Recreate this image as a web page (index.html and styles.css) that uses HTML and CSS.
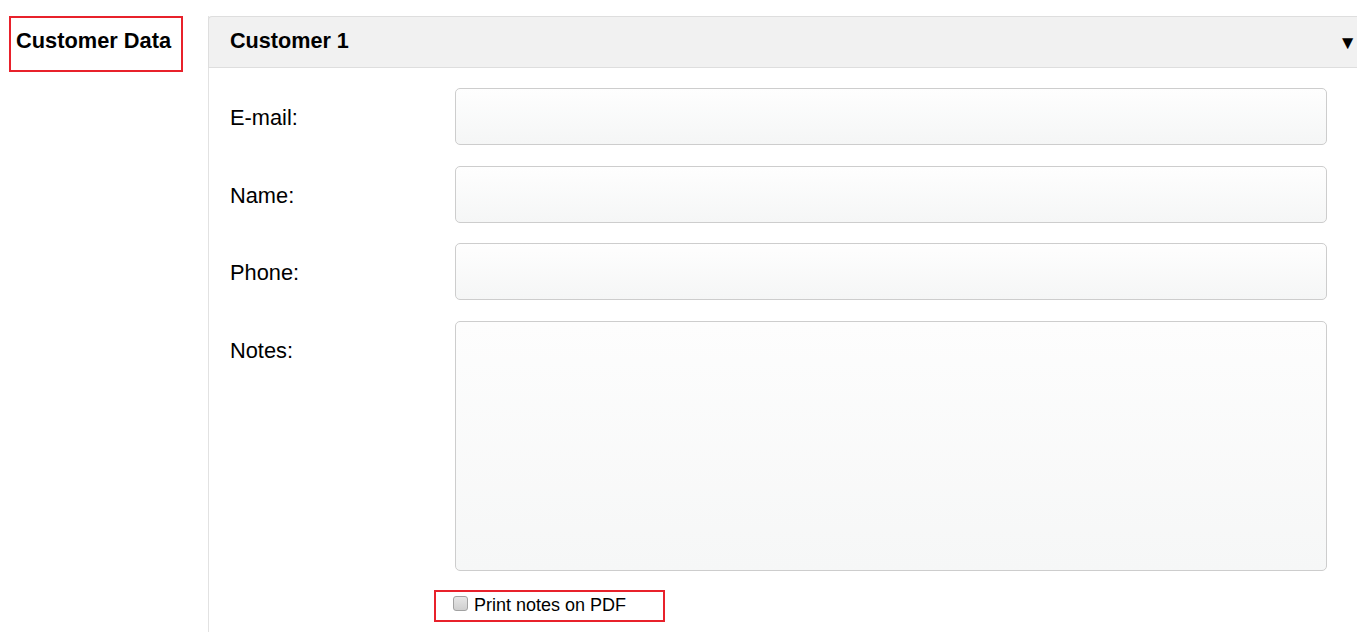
FILE: index.html
```html
<!doctype html>
<html>
<head>
    <title>Customer Data</title>
    <meta charset="utf-8"/>
    <meta name="viewport" content="width=device-width, initial-scale=1"/>
    <link rel="stylesheet" href="styles.css">
</head>
<body>
<div class="page">
    <div class="side">
        <h3 class="side-title">Customer Data</h3>
    </div>

    <div class="panel">
        <div class="panel-head">
            <span class="panel-title">Customer 1</span>
            <span class="caret">&#9660;</span>
        </div>
        <form class="panel-body">
            <label class="field-label" for="email">E-mail:</label>
            <input class="field" type="text" id="email" name="email"/>

            <label class="field-label" for="name">Name:</label>
            <input class="field" type="text" id="name" name="name"/>

            <label class="field-label" for="phone">Phone:</label>
            <input class="field" type="text" id="phone" name="phone"/>

            <label class="field-label" for="notes">Notes:</label>
            <textarea class="field notes" id="notes" name="notes"></textarea>

            <label class="print-opt">
                <input type="checkbox" id="print_notes" name="print_notes"/>
                <span>Print notes on PDF</span>
            </label>
        </form>
    </div>
</div>
</body>
</html>
```

FILE: styles.css
```css
html, body {
margin: 0;
padding: 0;
background-color: #fff;
overflow: hidden;
}
body {
font-family: "Liberation Sans", Arial, sans-serif;
color: #000;
}
.page {
display: flex;
align-items: flex-start;
padding-top: 16px;
height: 632px;
box-sizing: border-box;
}
.side {
width: 208px;
flex: none;
padding-left: 9px;
box-sizing: border-box;
}
.side-title {
margin: 0;
width: 174px;
height: 56px;
box-sizing: border-box;
border: 2px solid #e8212b;
padding: 10px 0 0 5px;
font-size: 21.8px;
line-height: 25px;
font-weight: bold;
white-space: nowrap;
}
.panel {
flex: none;
width: 1170px;
align-self: stretch;
border-left: 1px solid #e2e2e2;
}
.panel-head {
display: flex;
justify-content: space-between;
align-items: center;
height: 50px;
padding: 0 22px 0 21px;
background-color: #f1f1f1;
border-top: 1px solid #dedede;
border-bottom: 1px solid #dedede;
border-top-left-radius: 4px;
margin-left: -1px;
border-left: 1px solid #dedede;
}
.panel-title {
font-size: 21.6px;
font-weight: bold;
margin-top: -2px;
}
.caret {
font-size: 19px;
margin-top: 2px;
}
.panel-body {
display: grid;
grid-template-columns: 225px 872px;
row-gap: 20.67px;
padding: 20px 0 0 21px;
}
.field-label {
font-size: 21.8px;
line-height: 55px;
padding-top: 2px;
align-self: start;
}
.field {
height: 57px;
box-sizing: border-box;
margin: 0;
border: 1px solid #cdcdcd;
border-radius: 5px;
background: linear-gradient(#fefefe, #f5f6f6);
font: inherit;
}
.notes {
height: 250px;
resize: none;
background: linear-gradient(#fdfdfd, #f6f7f7);
}
.print-opt {
grid-column: 2;
display: flex;
align-items: center;
margin: -2px 0 0 -21px;
width: 231px;
height: 32px;
box-sizing: border-box;
border: 2px solid #e8212b;
padding-left: 14px;
font-size: 18px;
}
.print-opt input {
appearance: none;
-webkit-appearance: none;
margin: -4px 6px 0 3px;
width: 15px;
height: 15px;
box-sizing: border-box;
border: 1px solid #a2a2a2;
border-radius: 3px;
background: linear-gradient(#e6e6e6, #cfcfcf);
}
```
